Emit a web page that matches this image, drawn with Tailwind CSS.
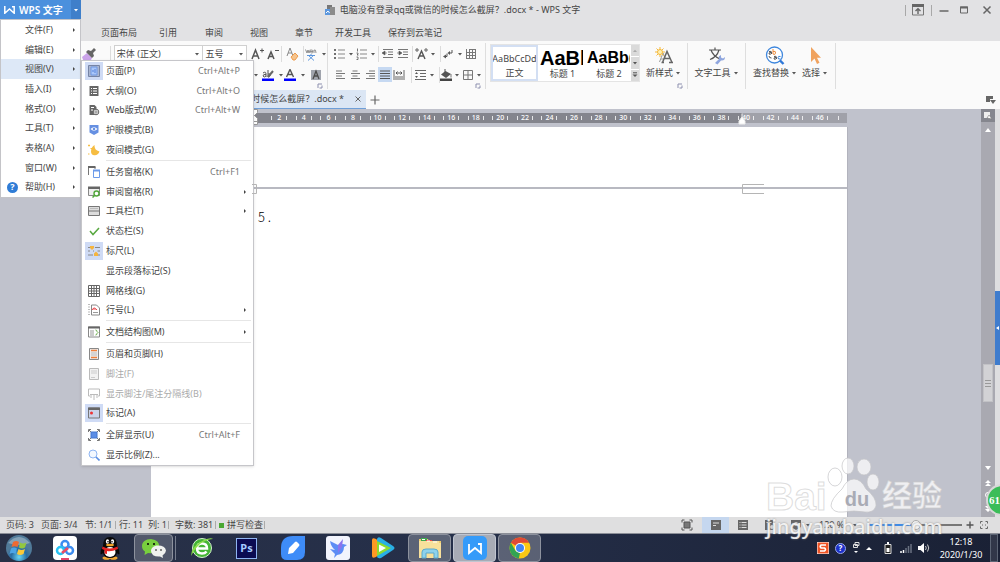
<!DOCTYPE html>
<html lang="zh-CN">
<head>
<meta charset="utf-8">
<title>WPS 文字</title>
<script src="https://cdn.jsdelivr.net/npm/@tailwindcss/browser@4"></script>
</head>
<body class="relative flex h-screen flex-col overflow-hidden bg-[#e2e2e4] font-['Noto_Sans','Noto_Sans_CJK_SC',sans-serif] text-[9px] leading-3 text-[#454545]">

<svg class="hidden" aria-hidden="true">
  <symbol id="car" viewBox="0 0 6 4"><path d="M1 1h4L3 3.4z" fill="#555"/></symbol>
  <symbol id="sub" viewBox="0 0 4 6"><path d="M1 1l2 2-2 2z" fill="#444"/></symbol>
  <symbol id="launch" viewBox="0 0 6 6"><path d="M1 5V1h4M5 2.500v2.500H2.500" fill="none" stroke="#8c8fae"/></symbol>
</svg>

<!-- Title bar -->
<header class="flex h-5 shrink-0 items-center">
  <button class="flex h-[19px] w-[71px] shrink-0 items-center gap-1 self-start bg-[#4b90dd] pl-1 text-[10px] font-semibold text-white">
    <svg class="h-2 w-[11px]" viewBox="0 0 11 8" fill="none" stroke="#fff" stroke-width="1.500"><path d="M.8 0v7.200L5.500 3l4.700 4.200V.8H8"/></svg>
    <span class="whitespace-nowrap">WPS 文字</span>
  </button>
  <button class="flex h-[19px] w-[10px] shrink-0 items-center justify-center self-start bg-[#3f7fca]" aria-label="主菜单"><svg class="h-1 w-1.5" viewBox="0 0 6 4"><path d="M1 1h4L3 3.400z" fill="#fff"/></svg></button>
  <div class="flex flex-1 items-center justify-center gap-1 pr-[82px]">
    <svg class="h-3 w-3" viewBox="0 0 12 12"><path d="M3 1h5v4H3z" fill="#777"/><path d="M6 3h5v8H6z" fill="#8b8b8b"/><path d="M1 5h5v6H1z" fill="#5c97dd"/><path d="M2 9l2-2 1.500 2" stroke="#fff" fill="none"/></svg>
    <h1 class="whitespace-nowrap">电脑没有登录qq或微信的时候怎么截屏？.docx * - WPS 文字</h1>
  </div>
  <div class="flex w-[95px] shrink-0 items-center">
    <i class="h-[11px] w-px bg-[#a8a8a8]"></i>
    <button class="ml-1.5" aria-label="收起功能区"><svg class="h-3 w-3" viewBox="0 0 12 12"><path d="M.5 1h11v10H.5z" fill="none" stroke="#777"/><path d="M0 0h12v3H0z" fill="#666"/><path d="M6 10V5M3.500 7L6 4.700 8.500 7" fill="none" stroke="#666" stroke-width="1.400"/></svg></button>
    <i class="ml-[7px] h-[11px] w-px bg-[#a8a8a8]"></i>
    <button class="ml-[7px]" aria-label="最小化"><svg class="h-2.5 w-2.5" viewBox="0 0 10 10"><path d="M.5 6h9" stroke="#666" stroke-width="1.500"/></svg></button>
    <button class="ml-2.5" aria-label="最大化"><svg class="h-2.5 w-2.5" viewBox="0 0 10 10"><path d="M1.500 2h7v6h-7z" fill="none" stroke="#666"/><path d="M1 1.500h8v2H1z" fill="#666"/></svg></button>
    <button class="ml-[13px]" aria-label="关闭"><svg class="h-2.5 w-2.5" viewBox="0 0 10 10"><path d="M1.500 1.500l7 7M8.500 1.500l-7 7" stroke="#666" stroke-width="1.500"/></svg></button>
  </div>
</header>

<!-- Ribbon tabs -->
<nav class="flex h-[21px] shrink-0 items-center whitespace-nowrap pt-1 pl-[101px]">
  <button class="w-[58px] text-left">页面布局</button>
  <button class="w-[46px] text-left">引用</button>
  <button class="w-[45px] text-left">审阅</button>
  <button class="w-[45px] text-left">视图</button>
  <button class="w-10 text-left">章节</button>
  <button class="w-[53px] text-left">开发工具</button>
  <button>保存到云笔记</button>
</nav>

<!-- Ribbon -->
<section class="flex h-[48px] shrink-0 bg-[#fafafa] pl-[81px] pt-0.5">
  <div class="relative flex w-[247px] shrink-0 flex-col border-r border-[#dedede]">
    <div class="flex h-[21px] items-center">
      <button class="w-[29px]" aria-label="格式刷"><svg class="h-4 w-4" viewBox="0 0 16 16"><path d="M1 11l5-4 5 5-2 4H3z" fill="#cba4ea"/><path d="M5 6l2-2 3 1 3-3 2 2-3 3 1 3-2 2z" fill="#666"/></svg></button>
      <i class="h-4 w-px bg-[#dcdcdc]"></i>
      <label class="ml-[3px] flex h-[18px] w-[90px] items-center border border-[#d0d0d0] bg-white px-0.5"><select aria-label="字体" class="min-w-0 flex-1 appearance-none bg-transparent"><option>宋体 (正文)</option></select><svg class="h-1 w-1.5"><use href="#car"/></svg></label>
      <label class="-ml-px flex h-[18px] w-[45px] items-center border border-[#d0d0d0] bg-white px-0.5"><select aria-label="字号" class="min-w-0 flex-1 appearance-none bg-transparent"><option>五号</option></select><svg class="h-1 w-1.5"><use href="#car"/></svg></label>
      <button class="ml-1 w-[15px]" aria-label="增大字号"><svg class="h-3.5 w-3.5" viewBox="0 0 14 14" fill="none" stroke="#555"><path d="M1 12L4.500 3 8 12M2.300 9h4.400" stroke-width="1.500"/><path d="M9 3.500h4M11 1.500v4"/></svg></button>
      <button class="w-[15px]" aria-label="减小字号"><svg class="h-3.5 w-3.5" viewBox="0 0 14 14" fill="none" stroke="#555"><path d="M2 12L5 5l3 7M3.200 9.500h3.600" stroke-width="1.500"/><path d="M9 3.500h4"/></svg></button>
      <i class="h-4 w-px bg-[#dcdcdc]"></i>
      <button class="ml-1 w-[15px]" aria-label="清除格式"><svg class="h-3.5 w-3.5" viewBox="0 0 14 14"><path d="M1 9L4 1l3 8M2 6h4" fill="none" stroke="#888"/><path d="M5 10l4-4 3 3-3 4H7z" fill="#f6c48d" stroke="#ef9b4c"/></svg></button>
      <i class="ml-0.5 h-4 w-px bg-[#dcdcdc]"></i>
      <button class="flex items-center gap-1 pl-px" aria-label="拼音指南"><svg class="h-3.5 w-3" viewBox="0 0 12 14"><path d="M.5 2.500L2 6l1-3 1 3 1.300-3.500M5.500 4.500H8C8 2.500 5.500 2.500 5.500 4.500S7 6 8 5.500M9 6V3q2-1 2 3" fill="none" stroke="#777" stroke-width=".8"/><path d="M2 8.500h8M6 7v1.500M3.500 8.500L9 13.500M8.500 8.500L3 13.500" fill="none" stroke="#5d96dc"/></svg><svg class="h-1 w-1.5"><use href="#car"/></svg></button>
    </div>
    <div class="flex h-[21px] items-center pl-[172px]">
      <svg class="h-1 w-1.5"><use href="#car"/></svg>
      <button class="ml-[3px] flex items-center gap-1" aria-label="突出显示"><svg class="h-3 w-3" viewBox="0 0 12 12"><path d="M1 4q3-2 3 1v3M4 5.500Q1 5 1 7q1 2 3 0M6 1v7M6 5q3-1 2 2l-2 1" fill="none" stroke="#555"/><path d="M6 8l5-6" stroke="#666" stroke-width="2"/><path d="M0 9.500h12V12H0z" fill="#00f"/></svg><svg class="h-1 w-1.5"><use href="#car"/></svg></button>
      <button class="flex items-center gap-1" aria-label="字体颜色"><svg class="h-3 w-3" viewBox="0 0 12 12"><path d="M2.500 8L6 .5 9.500 8M3.500 5.500h5" fill="none" stroke="#555" stroke-width="1.400"/><path d="M0 9.500h12V12H0z" fill="#00f"/></svg><svg class="h-1 w-1.5"><use href="#car"/></svg></button>
      <button class="ml-1" aria-label="字符底纹"><svg class="h-3 w-3" viewBox="0 0 12 12"><path d="M1 1h10v10H1z" fill="#a0a4ad"/><path d="M3 10l3-8 3 8M4 7h4" fill="none" stroke="#4b4b4b" stroke-width="1.300"/></svg></button>
    </div>
    <button class="absolute bottom-0 right-1" aria-label="字体设置"><svg class="h-1.5 w-1.5"><use href="#launch"/></svg></button>
  </div>

  <div class="relative flex w-[158px] shrink-0 flex-col border-r border-[#dedede] pl-1.5">
    <div class="flex h-[21px] items-center">
      <button class="flex w-[22px] items-center gap-0.5" aria-label="项目符号"><svg class="h-3 w-3" viewBox="0 0 12 12"><path d="M0 2h2M0 6h2M0 10h2" stroke="#444" stroke-width="1.600"/><path d="M4 2h7M4 6h7M4 10h7" stroke="#888"/></svg><svg class="h-1 w-1.5"><use href="#car"/></svg></button>
      <button class="flex w-[22px] items-center gap-0.5" aria-label="编号"><svg class="h-3 w-3" viewBox="0 0 12 12"><path d="M1.500.5v3M.5 5h1.500v1l-1 1h1.500M.5 9H2v2.500H.5" fill="none" stroke="#555" stroke-width=".8"/><path d="M4 2h7M4 6h7M4 10h7" stroke="#888"/></svg><svg class="h-1 w-1.5"><use href="#car"/></svg></button>
      <i class="h-4 w-px bg-[#dcdcdc]"></i>
      <button class="ml-[3px] w-[15px]" aria-label="减少缩进"><svg class="h-3 w-3" viewBox="0 0 12 12"><path d="M1 1.500h10M6 4h5M6 6.500h5M1 9.500h10" stroke="#777"/><path d="M0 5l3-2v4zM2 5h3" fill="#555" stroke="#555" stroke-width=".6"/></svg></button>
      <button class="w-[15px]" aria-label="增加缩进"><svg class="h-3 w-3" viewBox="0 0 12 12"><path d="M1 1.500h10M6 4h5M6 6.500h5M1 9.500h10" stroke="#777"/><path d="M5 5L2 3v4zM0 5h3" fill="#555" stroke="#555" stroke-width=".6"/></svg></button>
      <i class="h-4 w-px bg-[#dcdcdc]"></i>
      <button class="ml-0.5 flex w-[25px] items-center gap-0.5" aria-label="中文版式"><svg class="h-3 w-[13px]" viewBox="0 0 13 12"><path d="M3 11l3.500-8L10 11M4.500 8h4" fill="none" stroke="#555" stroke-width="1.400"/><path d="M0 2h4M2 0v4M9 2h4M11 0v4" stroke="#666"/></svg><svg class="h-1 w-1.5"><use href="#car"/></svg></button>
      <i class="h-4 w-px bg-[#dcdcdc]"></i>
      <button class="ml-0.5 flex w-[22px] items-center gap-0.5" aria-label="换行"><svg class="h-3 w-3" viewBox="0 0 12 12"><path d="M9 2v3H6M4 5.500v3H1" fill="none" stroke="#555"/><path d="M7 3v4L4.500 5zM3 6.500v4L0 8.500z" fill="#555"/></svg><svg class="h-1 w-1.5"><use href="#car"/></svg></button>
      <button aria-label="制表位"><svg class="h-3 w-3" viewBox="0 0 12 12" fill="none" stroke="#777"><path d="M1 4.500h10M1 7.500h10M1 10.500h10M1.500 1v10M4.500 1v10M7.500 1v10M10.500 1v10M4 1.500h7"/></svg></button>
    </div>
    <div class="flex h-[21px] items-center">
      <button class="w-[15px]" aria-label="左对齐"><svg class="h-3 w-3" viewBox="0 0 12 12"><path d="M2 2h6M2 4.500h9M2 7h6M2 9.500h9" stroke="#777"/></svg></button>
      <button class="w-[15px]" aria-label="居中"><svg class="h-3 w-3" viewBox="0 0 12 12"><path d="M3.500 2h5M2 4.500h9M3.500 7h5M2 9.500h9" stroke="#777"/></svg></button>
      <button class="w-[14px]" aria-label="右对齐"><svg class="h-3 w-3" viewBox="0 0 12 12"><path d="M5 2h6M2 4.500h9M5 7h6M2 9.500h9" stroke="#777"/></svg></button>
      <button class="flex h-[15px] w-3.5 items-center justify-center bg-[#c6d9f2]" aria-label="两端对齐"><svg class="h-3 w-3" viewBox="0 0 12 12"><path d="M1 2h10M1 4.500h10M1 7h10M1 9.500h10" stroke="#555"/></svg></button>
      <button class="ml-px w-[18px]" aria-label="分散对齐"><svg class="h-3 w-3" viewBox="0 0 12 12"><path d="M1 1v10M11 1v10M2 8h8M2 10h8" stroke="#666"/><path d="M3 4h6M4.500 2.500L3 4l1.500 1.500M7.500 2.500L9 4 7.500 5.500" fill="none" stroke="#555"/></svg></button>
      <i class="h-4 w-px bg-[#dcdcdc]"></i>
      <button class="ml-0.5 flex w-[25px] items-center gap-0.5" aria-label="行距"><svg class="h-3 w-[13px]" viewBox="0 0 13 12"><path d="M1 1.500h11M6 4.500h6M6 7.500h6M1 10.500h11" stroke="#666"/><path d="M2.500 3L1 5h3zM2.500 9L1 7h3z" fill="#555"/></svg><svg class="h-1 w-1.5"><use href="#car"/></svg></button>
      <i class="h-4 w-px bg-[#dcdcdc]"></i>
      <button class="flex w-[22px] items-center gap-0.5" aria-label="底纹颜色"><svg class="h-3 w-3" viewBox="0 0 12 12"><path d="M1 5.500L5.500 2 11 5 6 9z" fill="#555"/><path d="M5 0v5" stroke="#555"/><path d="M11 5v3.500" stroke="#777"/><path d="M0 9.500h12V12H0z" fill="#444"/></svg><svg class="h-1 w-1.5"><use href="#car"/></svg></button>
      <button class="flex items-center gap-0.5" aria-label="边框"><svg class="h-3 w-3" viewBox="0 0 12 12" fill="none" stroke="#777"><path d="M1.500 1.500h9v9h-9zM6 1.500v9M1.500 6h9"/></svg><svg class="h-1 w-1.5"><use href="#car"/></svg></button>
    </div>
    <button class="absolute bottom-0 right-1" aria-label="段落设置"><svg class="h-1.5 w-1.5"><use href="#launch"/></svg></button>
  </div>

  <div class="relative flex w-[202px] shrink-0 border-r border-[#dedede] pl-1">
    <div class="mt-px flex h-[38px] w-[151px] border border-[#e4e4e4] bg-white">
      <button class="flex w-[47px] shrink-0 flex-col items-center justify-between overflow-hidden border-2 border-[#d3dff3] pt-1.5"><span>AaBbCcDd</span><span>正文</span></button>
      <button class="flex w-[47px] shrink-0 flex-col items-start overflow-hidden pl-0.5 pt-[3px] text-black"><span class="w-[43px] overflow-hidden font-['Liberation_Sans',sans-serif] text-[20px] leading-5 font-bold">AaBb</span><span class="w-full text-center text-[#454545]">标题 1</span></button>
      <button class="flex w-[46px] shrink-0 flex-col items-start overflow-hidden pl-0.5 pt-[3px] text-black"><span class="w-[43px] overflow-hidden whitespace-nowrap font-['Liberation_Sans',sans-serif] text-[16px] leading-5 font-bold">AaBb(</span><span class="w-full text-center text-[#454545]">标题 2</span></button>
      <div class="flex flex-1 flex-col divide-y divide-white bg-[#dadada]">
        <button class="flex flex-1 items-center justify-center" aria-label="上一行"><svg class="h-1 w-1.5" viewBox="0 0 6 4"><path d="M1 3h4L3 .8z" fill="#aaa"/></svg></button>
        <button class="flex flex-1 items-center justify-center" aria-label="下一行"><svg class="h-1 w-1.5"><use href="#car"/></svg></button>
        <button class="flex flex-1 items-center justify-center" aria-label="更多样式"><svg class="h-1.5 w-1.5" viewBox="0 0 6 6"><path d="M1 .8h4" stroke="#555"/><path d="M.5 2.500h5L3 5z" fill="#555"/></svg></button>
      </div>
    </div>
    <button class="flex w-[47px] flex-col items-center pt-[3px]">
      <svg class="h-5 w-5" viewBox="0 0 20 20"><path d="M5.500 16L9 7l2 5M7 13h3" fill="none" stroke="#999"/><path d="M8.500 16.500l4.500-11 5 11M10 12.500h6M7.500 16.500h2.500M15 16.500h4" fill="none" stroke="#666" stroke-width="1.500"/><path d="M6 1v10M1 6h10M2.500 2.500l7 7M9.500 2.500l-7 7" stroke="#f5b83a"/><circle cx="6" cy="6" r="2.500" fill="#fff1b4" stroke="#f5b83a"/></svg>
      <span class="flex items-center gap-0.5 pt-px whitespace-nowrap">新样式<svg class="h-1 w-1.5"><use href="#car"/></svg></span>
    </button>
    <button class="absolute right-1 bottom-0" aria-label="样式设置"><svg class="h-1.5 w-1.5"><use href="#launch"/></svg></button>
  </div>

  <div class="flex w-[58px] shrink-0 justify-center border-r border-[#dedede]">
    <button class="flex flex-col items-center pt-[3px]">
      <svg class="h-5 w-5" viewBox="0 0 20 20"><path d="M3 4h12M9 1.500V4M5 4q2 6 9 9M13 4Q11 11 4 13.500" fill="none" stroke="#555" stroke-width="1.200"/><path d="M9 17l4-4q-1-3 2-4l0 2.500 2 1 2-1.500q0 4-4 3.500l-3.500 4z" fill="#8fa6de"/></svg>
      <span class="flex items-center gap-0.5 pt-px whitespace-nowrap">文字工具<svg class="h-1 w-1.5"><use href="#car"/></svg></span>
    </button>
  </div>
  <div class="flex w-[90px] shrink-0 justify-between border-r border-[#dedede] pr-[7px] pl-[7px]">
    <button class="flex flex-col items-center pt-[3px]">
      <svg class="h-5 w-5" viewBox="0 0 20 20"><circle cx="9.500" cy="9" r="8" fill="#fff" stroke="#3f87dd" stroke-width="1.300"/><path d="M15 14.500l3.500 3.500" stroke="#2f78d8" stroke-width="2.400"/><path d="M4 5.500q3-1 2.500 1.500V8M6.500 6.500Q3.500 6 4 8q1 .8 2.500-.5" fill="none" stroke="#555"/><path d="M8 3v5M8 5.500q3-1 2.500 1.500T8 8" fill="none" stroke="#ec8b3c"/><path d="M4 10q0 2 2.500 2M9 10.500q2.500-1 2.500 1V13M11.500 11.500Q8.500 11 9 13q1 .8 2.500-.5" fill="none" stroke="#555"/><path d="M15.500 10.500q-2.500-.8-2.500 1.200t2.500 1.200" fill="none" stroke="#3f87dd"/></svg>
      <span class="flex items-center gap-0.5 pt-px whitespace-nowrap">查找替换<svg class="h-1 w-1.5"><use href="#car"/></svg></span>
    </button>
    <button class="flex flex-col items-center pt-[3px]">
      <svg class="h-5 w-5" viewBox="0 0 20 20"><path d="M6 1v15l3.500-3.500L12 18l2.500-1.200-2.500-5H16z" fill="#f0a35f"/></svg>
      <span class="flex items-center gap-0.5 pt-px whitespace-nowrap">选择<svg class="h-1 w-1.5"><use href="#car"/></svg></span>
    </button>
  </div>
</section>

<!-- Document tabs -->
<div class="flex h-5 shrink-0 items-center bg-[#fafafa] pt-px">
  <div class="flex h-full w-[366px] items-center justify-end gap-2.5 border-b border-[#6f9fd8] bg-[#dbe6f4] pr-1">
    <span class="whitespace-nowrap">电脑没有登录qq或微信的时候怎么截屏？.docx *</span>
    <button aria-label="关闭标签"><svg class="h-2 w-2" viewBox="0 0 8 8"><path d="M1.500 1.500l5 5M6.500 1.500l-5 5" stroke="#666"/></svg></button>
  </div>
  <button class="ml-1" aria-label="新建标签"><svg class="h-2.5 w-2.5" viewBox="0 0 10 10"><path d="M5 .5v9M.5 5h9" stroke="#666" stroke-width="1.200"/></svg></button>
  <button class="mr-1 ml-auto" aria-label="标签列表"><svg class="h-2.5 w-2.5" viewBox="0 0 10 10"><path d="M0 1h7v3H4v3H0z" fill="#666"/><path d="M4 5h6L7 9z" fill="#666"/></svg></button>
</div>

<!-- Workspace -->
<main class="flex min-h-0 flex-1 bg-[#c0c2cc]">
  <div class="flex min-w-0 flex-1 flex-col pl-[151px]">
    <div class="relative mt-1 flex h-2.5 w-[696px] shrink-0 bg-[#a0a1a9]">
      <div class="ml-[104px] w-[487px] bg-[#84858d]"></div>
      <div id="ruler" class="absolute inset-y-0 right-[15px] left-[116px] flex text-[7px] leading-[10px] font-medium text-white"></div>
      <i class="absolute inset-y-[3px] right-2 w-px bg-white/80"></i>
      <svg class="absolute -top-1 left-[100px] h-4 w-2" viewBox="0 0 8 16"><path d="M.500.500h6v3l-3 3-3-3zM.500 9.500l3-3 3 3v6h-6zM.500 12.500h6" fill="#fff" stroke="#999"/></svg>
      <svg class="absolute top-0 left-[587px] h-3 w-2" viewBox="0 0 8 12"><path d="M4 .500l0 4M1 8l3-4 3 4v3H1z" fill="#fff" stroke="#eee"/></svg>
    </div>
    <div class="mt-1 flex min-h-0 w-[697px] flex-1 flex-col border-r border-[#b2b3bd] bg-white">
      <div class="relative h-[60px] shrink-0">
        <svg class="absolute -bottom-[7px] left-[591px] z-10 h-2.5 w-[22px]" viewBox="0 0 22 10"><path d="M22 .5H.5v9H22" fill="none" stroke="#b5b5b5"/></svg>
        <svg class="absolute -bottom-[7px] left-[101px] z-10 h-2.5 w-[5px]" viewBox="0 0 5 10"><path d="M0 .5h4.500v9H0" fill="none" stroke="#b5b5b5"/></svg>
      </div>
      <div class="h-0.5 shrink-0 bg-[#b8b9c1]"></div>
      <p class="pt-[18px] pl-[107px] font-['Noto_Sans_CJK_SC',sans-serif] text-[13px] leading-5 font-light text-black">5 .</p>
    </div>
  </div>
  <div class="flex w-3.5 shrink-0 flex-col items-center bg-[#a9a9b1]">
    <button class="flex h-[13px] w-full items-center justify-center bg-[#85868e]" aria-label="选择浏览对象"><svg class="h-2 w-2" viewBox="0 0 8 8"><path d="M0 0h6v6H0z" fill="#eee"/><path d="M3 6l2-3 3 4z" fill="#fff" stroke="#777" stroke-width=".6"/></svg></button>
    <svg class="mt-1.5 h-1 w-1.5" viewBox="0 0 6 4"><path d="M0 4l3-4 3 4z" fill="#fff"/></svg>
    <div class="mt-[232px] flex h-[38px] w-2.5 flex-col items-center justify-center gap-0.5 border border-[#c2c2c6] bg-[#d2d2d5]"><i class="h-px w-1.5 bg-[#999]"></i><i class="h-px w-1.5 bg-[#999]"></i><i class="h-px w-1.5 bg-[#999]"></i></div>
    <svg class="mt-auto h-1 w-1.5" viewBox="0 0 6 4"><path d="M0 0l3 4 3-4z" fill="#fff"/></svg>
    <svg class="mt-2.5 h-1.5 w-1.5" viewBox="0 0 6 6"><path d="M0 3l3-3 3 3zM0 6l3-3 3 3z" fill="#fff"/></svg>
    <i class="mt-1.5 size-1.5 rounded-full border border-white"></i>
    <svg class="mt-2 mb-[5px] h-1.5 w-1.5" viewBox="0 0 6 6"><path d="M0 0l3 3 3-3zM0 3l3 3 3-3z" fill="#fff"/></svg>
  </div>
  <div class="w-[5px] shrink-0 bg-[#dedee0] pt-[182px]"><button class="flex h-[74px] w-full items-center justify-center bg-[#3f7ccd]" aria-label="展开侧栏"><svg class="h-1 w-[3px]" viewBox="0 0 3 4"><path d="M3 0v4L0 2z" fill="#fff"/></svg></button></div>
</main>

<!-- Status bar -->
<footer class="flex h-4 shrink-0 items-center bg-[#dfdfe0] pl-1.5 whitespace-nowrap">
  <span class="w-[35px]">页码: 3</span>
  <span class="w-11">页面: 3/4</span>
  <span class="w-[30px]">节: 1/1</span>
  <i class="h-2 w-px bg-[#aaa]"></i>
  <span class="ml-[3px] w-[29px]">行: 11</span>
  <span class="w-5">列: 1</span>
  <i class="h-2 w-px bg-[#aaa]"></i>
  <span class="ml-1.5 w-10">字数: 381</span>
  <i class="h-2 w-px bg-[#aaa]"></i>
  <i class="ml-[3px] size-[5px] bg-[#4aa832]"></i>
  <span class="ml-[3px] w-[37px]">拼写检查</span>
  <i class="h-2 w-px bg-[#aaa]"></i>
  <div class="ml-auto flex h-full items-center">
    <button class="w-[21px]" aria-label="全屏显示"><svg class="h-3 w-3" viewBox="0 0 12 12"><path d="M3 3h6v6H3z" fill="#777" stroke="#555"/><path d="M1 3.500V1h2.500M8.500 1H11v2.500M11 8.500V11H8.500M3.500 11H1V8.500" fill="none" stroke="#555"/></svg></button>
    <button class="flex h-full w-[27px] items-center justify-center bg-[#c5d7ef]" aria-label="页面视图"><svg class="h-2.5 w-2.5" viewBox="0 0 10 10"><path d="M0 0h10v10H0z" fill="#666"/><path d="M2 3h6M2 5.500h3" stroke="#ddd"/></svg></button>
    <button class="flex w-[27px] justify-center" aria-label="大纲视图"><svg class="h-2.5 w-2.5" viewBox="0 0 10 10"><path d="M0 0h10v10H0z" fill="#666"/><path d="M1.500 2.500h1M3.500 2.500h5M1.500 5h1M3.500 5h5M1.500 7.500h1M3.500 7.500h5" stroke="#ddd"/></svg></button>
    <button class="flex w-[27px] justify-center" aria-label="Web 版式"><svg class="h-2.5 w-2.5" viewBox="0 0 10 10"><path d="M0 0h8v10H0z" fill="#666"/><path d="M1.500 2.500h5" stroke="#ddd"/><circle cx="7" cy="7" r="2.500" fill="#ddd" stroke="#666"/></svg></button>
    <button class="flex w-[36px] items-center justify-center gap-1" aria-label="护眼模式"><svg class="h-2.5 w-2.5" viewBox="0 0 10 10"><path d="M0 0h10v7L5 10 0 7z" fill="#666"/><circle cx="5" cy="4" r="2" fill="#ddd"/></svg><svg class="h-1 w-1.5"><use href="#car"/></svg></button>
    <button class="flex w-[49px] items-center gap-2">120 %<svg class="h-1 w-1.5"><use href="#car"/></svg></button>
    <input type="range" aria-label="显示比例" value="51" class="h-0.5 w-[94px] appearance-none bg-linear-to-r from-[#3f8be6] from-50% to-[#777] to-50% [&::-webkit-slider-thumb]:size-2.5 [&::-webkit-slider-thumb]:appearance-none [&::-webkit-slider-thumb]:rounded-full [&::-webkit-slider-thumb]:border [&::-webkit-slider-thumb]:border-[#aaa] [&::-webkit-slider-thumb]:bg-[#f4f4f4]">
    <button class="ml-1" aria-label="放大"><svg class="h-2 w-2" viewBox="0 0 8 8"><path d="M4 .500v7M.500 4h7" stroke="#555" stroke-width="1.400"/></svg></button>
    <button class="mr-3 ml-1.5" aria-label="适合窗口"><svg class="h-2 w-2" viewBox="0 0 8 8"><path d="M.500 2.500v-2h2M5.500.500h2v2M7.500 5.500v2h-2M2.500 7.500h-2v-2M2 4h1M5 4h1" fill="none" stroke="#666"/></svg></button>
  </div>
</footer>

<!-- Taskbar -->
<nav class="flex h-[29px] shrink-0 items-center border-t border-[#8b8e97] bg-linear-to-r from-[#283046] via-[#252f49] via-45% to-[#1a2135] text-white">
  <button class="ml-[5px]" aria-label="开始"><svg class="size-7" viewBox="0 0 28 28"><defs><radialGradient id="orb" cy=".85"><stop offset="0" stop-color="#69d6f3"/><stop offset=".6" stop-color="#286da4"/><stop offset="1" stop-color="#507a99"/></radialGradient></defs><circle cx="14" cy="14" r="13" fill="url(#orb)"/><path d="M3 9Q14-3 25 9q-10 4-22 0" fill="#fff" opacity=".3"/><path d="M8 8q3-2 6 0l-1.500 5q-3-1.500-6 0z" fill="#ee6a32"/><path d="M15 8.500q3 2 6.500 0L20 13.500q-3 2-6 0z" fill="#93c83e"/><path d="M6 14.500q3-2 6 0L10.500 20q-3-2-6 0z" fill="#4ca5e6"/><path d="M13.500 15q3 2 6.500 0l-1.500 5q-3.500 2-6.500 0z" fill="#fbc938"/></svg></button>
  <button class="ml-5" aria-label="百度网盘"><svg class="size-6" viewBox="0 0 24 24"><rect width="24" height="24" rx="4" fill="#fff"/><g fill="none" stroke-width="2.500"><circle cx="12" cy="8.500" r="3.500" stroke="#3c8cf0"/><circle cx="7.500" cy="14.500" r="3.500" stroke="#27c1f3"/><circle cx="16.500" cy="14.500" r="3.500" stroke="#3c8cf0"/><path d="M9 17l6-5" stroke="#ee4863"/></g><path d="M8 22h8v2H8z" fill="#e4446a"/></svg></button>
  <button class="ml-[21px]" aria-label="QQ"><svg class="size-6" viewBox="0 0 24 24"><ellipse cx="8.500" cy="22" rx="4" ry="1.800" fill="#f1a631"/><ellipse cx="15.500" cy="22" rx="4" ry="1.800" fill="#f1a631"/><path d="M5 10q0-9 7-9t7 9q3 4 2.500 8-1 1-2.500-1-1 5-7 5t-7-5q-1.500 2-2.500 1Q2 14 5 10" fill="#090909"/><ellipse cx="12" cy="16" rx="5.500" ry="5" fill="#fff"/><path d="M4.500 10.500q7 4 15 0l.5 2.500q-7 3-11 2v3l-2.500-.5V14L4 13z" fill="#e52323"/><ellipse cx="9.500" cy="5.500" rx="1.600" ry="2.200" fill="#fff"/><ellipse cx="14.500" cy="5.500" rx="1.600" ry="2.200" fill="#fff"/><circle cx="10" cy="5.700" r=".8"/><circle cx="14" cy="5.700" r=".8"/><ellipse cx="12" cy="9" rx="4" ry="1.300" fill="#f3a427"/></svg></button>
  <button class="ml-3 flex h-7 w-[39px] items-center justify-center rounded-sm border border-[#8d929e] bg-white/20" aria-label="微信"><svg class="size-6" viewBox="0 0 24 24"><path d="M9 3C3.500 3 0 6 0 10q0 3.500 3 5.500L2.500 19 6 17q9 1 11.500-5Q18 4 9 3" fill="#78cf3e"/><path d="M16 9.500c-4.500 0-7 2.500-7 5.500q.500 6 9 5.500l3 1.500-.5-2.500Q24 17 24 14.500q-1-5-8-5" fill="#f0f1ee"/><circle cx="6" cy="8" r="1"/><circle cx="12" cy="8" r="1"/><circle cx="14" cy="14" r=".8"/><circle cx="19" cy="14" r=".8"/></svg></button>
  <i class="ml-0.5 h-6 w-px bg-[#767d8e]"></i>
  <button class="ml-3.5" aria-label="浏览器"><svg class="size-6" viewBox="0 0 24 24"><circle cx="12" cy="12" r="9.500" fill="#45b535" stroke="#d5f1cf"/><path d="M7.500 12.500h9.500q0-5-5-5t-5 5 5 5q3 0 4.500-2" fill="none" stroke="#fff" stroke-width="2.500"/><path d="M1 20Q1 10 14 4q7-3 9-1-4 0-10 3T1 20" fill="#8bdd46"/></svg></button>
  <button class="ml-[22px] flex size-[21px] items-center justify-center border border-[#8fb4f2] bg-[#0b0b52] text-[11px] font-bold text-[#a5caff]">Ps</button>
  <button class="ml-6" aria-label="便签"><svg class="size-6" viewBox="0 0 24 24"><path d="M12 0h12v16q0 8-8 8H6q-6 0-6-6v-6Q0 0 12 0" fill="#3e8cf8"/><path d="M7 18l1-6 6-6q1-1 2 0l2 2q1 1 0 2l-6 7z" fill="#fff"/></svg></button>
  <button class="ml-[21px]" aria-label="迅雷"><svg class="size-6" viewBox="0 0 24 24"><rect width="24" height="24" rx="3" fill="#f2f4fd"/><path d="M4 5l8 4 5-1 4 1-3 2q0 7-7 8l-3 3 1-4-5-5 5 1q-4-3-5-9" fill="#5d8cf5"/><path d="M12 9l5-6-1 8-4 6z" fill="#8b74ee"/></svg></button>
  <button class="ml-[21px]" aria-label="腾讯视频"><svg class="size-6" viewBox="0 0 24 24"><path d="M1 4q0-3 4-1l5 4v10l-5 4q-4 2-4-1z" fill="#ff9924"/><path d="M6 3q1-3 4-1l12 8q3 2 0 4l-12 8q-4 1-4-2z" fill="#29afe6"/><path d="M6 5l14 7-14 8z" fill="#8edb30"/><path d="M8 8.500l7 3.500-7 4z" fill="#fff"/></svg></button>
  <button class="ml-[13px] flex h-7 w-[43px] items-center justify-center rounded-sm border border-[#8d929e] bg-white/25" aria-label="资源管理器"><svg class="size-6" viewBox="0 0 24 24"><path d="M1 3h9l1 2h12v17H1z" fill="#eecb6d"/><path d="M3 2h6v4H3z" fill="#3faa4f"/><path d="M8 4h6v3H8z" fill="#e44"/><path d="M14 5h6v3h-6z" fill="#49a0de"/><path d="M1 5h20v2h2v15H1z" fill="#f8e09b"/><path d="M4 3.500h3M9 5h3M15 6h4" stroke="#fff"/><path d="M4 22v-6q0-3 4-3h8q4 0 4 3v6h-4v-5H8v5z" fill="#8ed2ec" stroke="#5ba9cc"/></svg></button>
  <button class="ml-0.5 flex h-7 w-[43px] items-center justify-center rounded-sm border border-[#c0c5d0] bg-white/60" aria-label="WPS"><svg class="size-6" viewBox="0 0 24 24"><rect width="24" height="24" rx="5" fill="#359bf9"/><path d="M6 8v9l6-5 6 5V8h-3" fill="none" stroke="#fff" stroke-width="1.800"/></svg></button>
  <button class="ml-0.5 flex h-7 w-[43px] items-center justify-center rounded-sm border border-[#8d929e] bg-white/25" aria-label="Chrome"><svg class="size-[22px]" viewBox="0 0 22 22"><circle cx="11" cy="11" r="10.500" fill="#fbc814"/><path d="M11 11L1.900 5.700A10.500 10.500 0 0 1 20.100 5.700H11z" fill="#e04a35"/><path d="M1.900 5.700L6.500 13.700 11 16l-1.200 5.400A10.500 10.500 0 0 1 1.900 5.700" fill="#32a453"/><circle cx="11" cy="11" r="5" fill="#fff"/><circle cx="11" cy="11" r="4" fill="#4285f4"/></svg></button>

  <div class="ml-auto flex items-center">
    <svg class="size-3" viewBox="0 0 12 12"><rect width="12" height="12" rx="1" fill="#ee5325" stroke="#fff"/><path d="M9 3H4q-1.500 1.500 0 3h3.500q2 1.500 0 3H3" fill="none" stroke="#fff" stroke-width="1.600"/></svg>
    <span class="ml-1.5 flex size-[11px] items-center justify-center rounded-full border border-[#9ca9e8] bg-[#1c30c9] text-[8px] font-bold">?</span>
    <svg class="ml-1.5 h-3.5 w-2" viewBox="0 0 8 14"><path d="M3 1.500h4v3H3zM1.500 3.500h4v3h-4z" fill="none" stroke="#ddd"/><path d="M2 10h4l-2 2z" fill="#fff"/></svg>
    <svg class="ml-1.5 h-1 w-1.5" viewBox="0 0 6 4"><path d="M0 4l3-3 3 3z" fill="#fff"/></svg>
    <svg class="ml-3 h-3 w-2" viewBox="0 0 8 12"><path d="M1 2.500h6v9H1z" fill="#222" stroke="#ddd"/><path d="M3 0h2v2H3zM2.500 6h3v4h-3z" fill="#fff"/></svg>
    <svg class="ml-2 h-2.5 w-3" viewBox="0 0 12 10"><path d="M1 10V8M3.500 10V7" stroke="#fff" stroke-width="1.500"/><path d="M6 10V5M8.500 10V3M11 10V1" stroke="#697181" stroke-width="1.500"/></svg>
    <svg class="ml-1.5 h-3 w-3" viewBox="0 0 12 12"><path d="M0 4h2.500L6 1v10L2.500 8H0z" fill="#fff"/><path d="M7.500 4q1.500 2 0 4M9.500 2.500q2.500 3.500 0 7" fill="none" stroke="#ccc"/></svg>
    <time class="mr-0.5 ml-1 w-[54px] text-center leading-[13px]">12:18<br>2020/1/30</time>
    <button class="mr-0.5 h-7 w-2 border border-[#5b6474] bg-white/10" aria-label="显示桌面"></button>
  </div>
</nav>

<!-- Main menu -->
<ul class="absolute top-[19px] left-0 flex h-[179px] w-[81px] flex-col border border-[#c4c4c8] bg-white [&>li]:min-h-0 [&>li]:flex-1 [&_button]:flex [&_button]:h-full [&_button]:w-full [&_button]:items-center [&_button]:pl-6 [&_button]:pr-1 [&_svg:last-child]:ml-auto [&_svg:last-child]:h-1.5 [&_svg:last-child]:w-1">
  <li><button>文件(F)<svg><use href="#sub"/></svg></button></li>
  <li><button>编辑(E)<svg><use href="#sub"/></svg></button></li>
  <li class="bg-[#dde8f7]"><button>视图(V)<svg><use href="#sub"/></svg></button></li>
  <li><button>插入(I)<svg><use href="#sub"/></svg></button></li>
  <li><button>格式(O)<svg><use href="#sub"/></svg></button></li>
  <li><button>工具(T)<svg><use href="#sub"/></svg></button></li>
  <li><button>表格(A)<svg><use href="#sub"/></svg></button></li>
  <li><button>窗口(W)<svg><use href="#sub"/></svg></button></li>
  <li class="relative"><button><span class="absolute left-1.5 flex size-[11px] items-center justify-center rounded-full bg-[#2f7cd6] text-[9px] font-bold text-white">?</span>帮助(H)<svg><use href="#sub"/></svg></button></li>
</ul>

<!-- View submenu -->
<ul class="absolute top-[60px] left-[81px] flex h-[406px] w-[173px] flex-col border border-[#c6c6ca] bg-white shadow-sm [&>li]:min-h-0 [&>li]:flex-1 [&>hr]:mr-0.5 [&>hr]:ml-6 [&>hr]:mb-px [&>hr]:border-[#e6e6e6] [&_button]:flex [&_button]:h-full [&_button]:w-full [&_button]:items-center [&_button]:whitespace-nowrap [&_button]:pl-[3px] [&_i]:mr-[3px] [&_i]:flex [&_i]:size-[18px] [&_i]:items-center [&_i]:justify-center [&_i>svg]:size-3 [&_kbd]:mr-[13px] [&_kbd]:ml-auto [&_kbd]:font-[inherit] [&_kbd]:text-[#777]">
  <li><button><i class="bg-[#cfdbf5]"><svg viewBox="0 0 12 12"><path d="M.500.500h11v11H.500z" fill="#aab5cf" stroke="#7684a5"/><path d="M3 2h6v8H3z" fill="#a9c6fa" stroke="#6f97e3"/><path d="M4 6h2M7 4v4" stroke="#5481da"/></svg></i>页面(P)<kbd>Ctrl+Alt+P</kbd></button></li>
  <li><button><i><svg viewBox="0 0 12 12"><path d="M1.500 1h9v10h-9z" fill="#666"/><path d="M3 3.500h1M5 3.500h4M3 6h1M5 6h4M3 8.500h1M5 8.500h4" stroke="#fff"/></svg></i>大纲(O)<kbd>Ctrl+Alt+O</kbd></button></li>
  <li><button><i><svg viewBox="0 0 12 12"><path d="M1.500 1h5l2 2v8h-7z" fill="#666"/><path d="M3 3.500h3M3 6h2" stroke="#fff"/><circle cx="8" cy="8" r="2.800" fill="#eee" stroke="#666"/><path d="M6 8h4M8 5.500v5" stroke="#666" stroke-width=".6"/></svg></i>Web版式(W)<kbd>Ctrl+Alt+W</kbd></button></li>
  <li><button><i><svg viewBox="0 0 12 12"><path d="M1.500 1h9v7.500L6 11 1.500 8.500z" fill="#6690e2"/><path d="M2.500 5Q6 1.500 9.500 5 6 8.500 2.500 5" fill="#fff"/><circle cx="6" cy="5" r="1.300" fill="#6690e2"/></svg></i>护眼模式(B)</button></li>
  <li><button><i><svg viewBox="0 0 12 12"><path d="M6.500 1Q6 6 11.500 7.500 10 11.500 6.500 11.300 3 11 3 7.500 3 3 6.500 1" fill="#f6bd42"/><path d="M0 1.500h2M1 .500v2M2.500 4.500h1.500M0 10h1.500" stroke="#f6bd42"/></svg></i>夜间模式(G)</button></li>
  <hr>
  <li><button><i><svg viewBox="0 0 12 12"><path d="M.500 9V1h6.500v2" fill="none" stroke="#777"/><path d="M0 0h7.500v2H0z" fill="#666"/><path d="M5.500 4.500h6v7h-6z" fill="#fff" stroke="#6d9bea"/><path d="M5 3.500h7v2H5z" fill="#6d9bea"/></svg></i>任务窗格(K)<kbd>Ctrl+F1</kbd></button></li>
  <li><button><i><svg viewBox="0 0 12 12"><path d="M.500 1.500h11v8H.500z" fill="#eee" stroke="#888"/><path d="M0 .500h12v2.500H0z" fill="#666"/><circle cx="8.500" cy="7.500" r="2.500" fill="#fff" stroke="#52a83b" stroke-width="1.400"/><path d="M6.500 9.500l-2 2" stroke="#52a83b" stroke-width="1.500"/></svg></i>审阅窗格(R)<svg class="mr-1.5 ml-auto h-1.5 w-1"><use href="#sub"/></svg></button></li>
  <li><button><i><svg viewBox="0 0 12 12"><path d="M.500 1.500h11v9H.500zM.500 6h11" fill="#ddd" stroke="#777"/><path d="M2 3.500h8" stroke="#bbb"/></svg></i>工具栏(T)<svg class="mr-1.5 ml-auto h-1.5 w-1"><use href="#sub"/></svg></button></li>
  <li><button><i><svg viewBox="0 0 12 12"><path d="M2 6l3 3.500L11 3" fill="none" stroke="#58a840" stroke-width="1.500"/></svg></i>状态栏(S)</button></li>
  <li><button><i class="bg-[#cfdbf5]"><svg viewBox="0 0 12 12"><path d="M0 2.500h2M7 2.500h5M0 10h5M10 10h2M0 6h2M5 6h1M9.500 6H12" stroke="#888"/><path d="M2 1h4v2l-2 2-2-2zM6 11V8.500l2-2 2 2V11z" fill="#f5b43f"/></svg></i>标尺(L)</button></li>
  <li><button><i></i>显示段落标记(S)</button></li>
  <li><button><i><svg viewBox="0 0 12 12" stroke="#666"><path d="M.500.500h11v11H.500zM3.500 0v12M6 0v12M8.500 0v12M0 3.500h12M0 6h12M0 8.500h12" fill="none"/></svg></i>网格线(G)</button></li>
  <li><button><i><svg viewBox="0 0 12 12"><path d="M1 0v12" stroke="#777" stroke-dasharray="1 1.500"/><path d="M3.500 1h5l3 3v7h-8z" fill="#fff" stroke="#888"/><path d="M4 6q2-4 5 0" stroke="#e5484d" fill="#f7a1a3"/><path d="M5 8.500h5" stroke="#999"/></svg></i>行号(L)<svg class="mr-1.5 ml-auto h-1.5 w-1"><use href="#sub"/></svg></button></li>
  <hr>
  <li><button><i><svg viewBox="0 0 12 12"><path d="M.500 1h11v10H.500z" fill="#fff" stroke="#888"/><path d="M0 .500h12v2H0z" fill="#666"/><path d="M2 5h4M2 7h4M2 9h4" stroke="#999"/><path d="M7.500 4q1.500 0 1.500 1.500l1 1-1 1Q9 9 7.500 9" fill="none" stroke="#65ab43"/></svg></i>文档结构图(M)<svg class="mr-1.5 ml-auto h-1.5 w-1"><use href="#sub"/></svg></button></li>
  <hr>
  <li><button><i><svg viewBox="0 0 12 12"><path d="M1.500.500h9v11h-9z" fill="#eee" stroke="#888"/><path d="M3 2.500h6M3 9.500h6" stroke="#ef813c" stroke-width="1.500"/><path d="M3 5h6M3 7h6" stroke="#bbb"/></svg></i>页眉和页脚(H)</button></li>
  <li><button class="text-[#aaa]" disabled><i><svg viewBox="0 0 12 12"><path d="M1.500.500h9v11h-9z" fill="#f2f2f2" stroke="#bbb"/><path d="M3 3h6M3 5h6M3 9.500h4" stroke="#ccc"/></svg></i>脚注(F)</button></li>
  <li><button class="text-[#aaa]" disabled><i><svg viewBox="0 0 12 12"><path d="M2 8H.500V1h11v7H10M3 6v4M6 7v5M9 6v4M2 6.500h8" fill="none" stroke="#bbb"/></svg></i>显示脚注/尾注分隔线(B)</button></li>
  <li><button><i class="bg-[#cfdbf5]"><svg viewBox="0 0 12 12"><path d="M.500 1h11v10H.500z" fill="#cbd3e8" stroke="#777"/><path d="M0 .500h12v2.500H0z" fill="#666"/><circle cx="3.500" cy="6" r="1.500" fill="#e33"/></svg></i>标记(A)</button></li>
  <hr>
  <li><button><i><svg viewBox="0 0 12 12"><path d="M3 3h6v6H3z" fill="#5b8de5" stroke="#4376cf"/><path d="M.500 3V.500H3M9 .500h2.500V3M11.500 9v2.500H9M3 11.500H.500V9M1 1l2 2M11 1L9 3M1 11l2-2M11 11L9 9" fill="none" stroke="#777"/></svg></i>全屏显示(U)<kbd>Ctrl+Alt+F</kbd></button></li>
  <li><button><i><svg viewBox="0 0 12 12"><circle cx="5" cy="5" r="4" fill="#f3f8ff" stroke="#8fb6f3"/><path d="M8 8l3.500 3.500" stroke="#5c8fe3" stroke-width="1.600"/></svg></i>显示比例(Z)...</button></li>
</ul>

<!-- Assistant ball -->
<button class="absolute right-[-18px] bottom-[46px] flex size-8 items-center rounded-full border-2 border-[#d8d8d8] bg-[#3bbd58] pl-px font-['Liberation_Serif',serif] text-[11px] font-bold text-white">61</button>

<!-- Baidu watermark -->
<div class="pointer-events-none absolute right-[54px] bottom-[23px] w-[180px] text-white/75">
  <div class="flex items-end">
    <span class="w-[60px] font-['Liberation_Sans',sans-serif] text-[39px] leading-9 font-bold [-webkit-text-stroke:1px_#c9c9c9a0]">Bai</span>
    <span class="relative flex h-[58px] w-[54px] items-end justify-center pb-1 pl-2 font-['Liberation_Sans',sans-serif] text-[20px] leading-6 font-bold text-[#a9abb5]">
      <svg class="absolute inset-0 size-full" viewBox="0 0 54 58" fill="#fff" fill-opacity=".72" stroke="#c4c4c8" stroke-opacity=".7"><ellipse cx="9" cy="20" rx="7" ry="9"/><ellipse cx="22" cy="9" rx="6" ry="8"/><ellipse cx="38" cy="10" rx="7" ry="8"/><ellipse cx="47" cy="25" rx="6" ry="8"/><path d="M28 22q7 0 12 10 11 9 10 17-2 7-11 6-11-2-22 0-10 1-12-6 0-7 11-17 5-10 12-10z"/></svg>
      <span class="relative">du</span>
    </span>
    <span class="pl-0.5 text-[30px] leading-10 font-bold whitespace-nowrap [-webkit-text-stroke:1px_#c9c9c9a0]">经验</span>
  </div>
  <div class="text-[20px] leading-6 font-medium text-white/85 [text-shadow:0_0_2px_#888]">jingyan.baidu.com</div>
</div>

<script>
  const ruler = document.getElementById('ruler');
  for (let n = 2; n <= 46; n += 2) {
    ruler.insertAdjacentHTML('beforeend',
      `<span class="flex flex-1 items-center justify-center gap-[3px]"><i class="h-1 w-px bg-white/80"></i><span class="w-2 text-center">${n}</span><i class="h-1 w-px bg-white/80"></i></span>`);
  }
</script>
</body>
</html>
